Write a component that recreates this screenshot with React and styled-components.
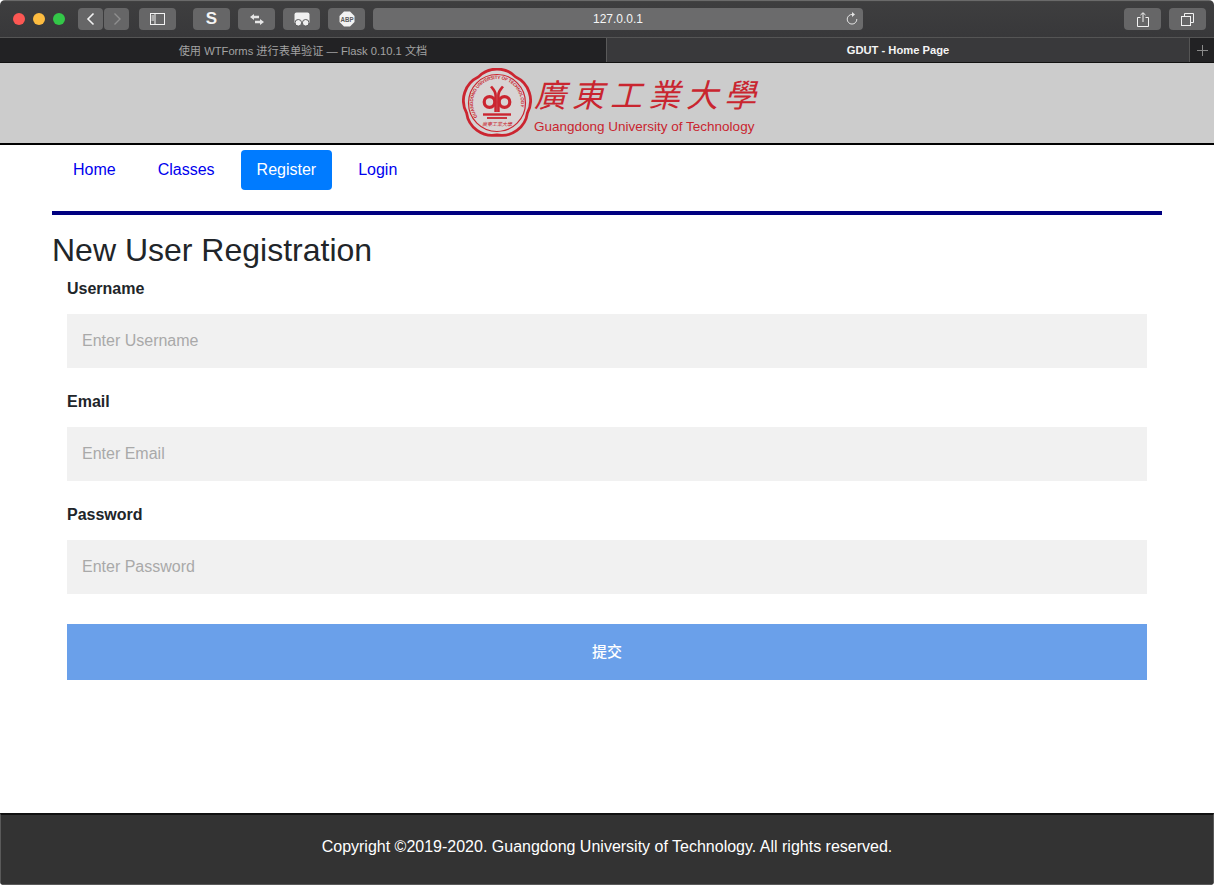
import React from 'react';
import styled, { createGlobalStyle } from 'styled-components';

const GlobalStyle = createGlobalStyle`
  html, body { margin: 0; padding: 0; background: #fff; }
  body { font-family: "Liberation Sans", Arial, sans-serif; color: #212529; }
  * { box-sizing: border-box; }
`;

const Page = styled.div`
  width: 1214px;
  height: 885px;
  display: flex;
  flex-direction: column;
  overflow: hidden;
  position: relative;
  border-radius: 5px 5px 4px 4px;
`;

const TitleBar = styled.div`
  height: 37px;
  flex: none;
  display: flex;
  align-items: center;
  padding: 0 8px 0 13px;
  background: linear-gradient(#444 0, #3e3e3f 4%, #38383a 100%);
  border-top: 1px solid #6a6a6a;
`;

const Lights = styled.div`
  display: flex;
  gap: 8px;
  margin-right: 13px;
`;

const Light = styled.span`
  width: 12px;
  height: 12px;
  border-radius: 50%;
  background: ${p => p.$color};
`;

const Tool = styled.div`
  width: ${p => p.$w || 37}px;
  height: 22px;
  margin-left: ${p => p.$ml || 0}px;
  flex: none;
  border-radius: 4px;
  background: #666667;
  display: flex;
  align-items: center;
  justify-content: center;
  color: #f2f2f2;
`;

const SLetter = styled.span`
  font-size: 17px;
  font-weight: 700;
  color: #f4f4f4;
`;

const AddressBar = styled.div`
  width: 490px;
  height: 22px;
  margin-left: 8px;
  flex: none;
  position: relative;
  border-radius: 4px;
  background: #6b6b6c;
  color: #f6f6f6;
  font-size: 12px;
  display: flex;
  align-items: center;
  justify-content: center;
`;

const Reload = styled.span`
  position: absolute;
  right: 4px;
  top: 4px;
  display: flex;
`;

const Spacer = styled.div`
  flex: 1;
`;

const TabBar = styled.div`
  height: 26px;
  flex: none;
  display: flex;
  background: #222224;
  border-top: 1px solid #555;
  border-bottom: 1px solid #111;
`;

const Tab = styled.div`
  flex: none;
  width: ${p => p.$w}px;
  display: flex;
  align-items: center;
  justify-content: center;
  font-size: 11.2px;
  font-weight: ${p => (p.$active ? 700 : 400)};
  font-family: "Liberation Sans", "Noto Sans CJK SC", sans-serif;
  color: ${p => (p.$active ? '#f4f4f4' : '#a3a3a3')};
  background: ${p => (p.$active ? '#39393b' : '#222224')};
  border-left: ${p => (p.$active ? '1px solid #5a5a5a' : 'none')};
`;

const NewTab = styled.div`
  flex: 1;
  display: flex;
  align-items: center;
  justify-content: center;
  border-left: 1px solid #555;
  color: #8a8a8a;
`;

const Banner = styled.header`
  height: 82px;
  flex: none;
  padding-left: 6px;
  background: #cccccc;
  border-bottom: 2px solid #000;
  display: flex;
  justify-content: center;
  align-items: center;
`;

const Logo = styled.div`
  display: flex;
  align-items: center;
  gap: 2px;
  color: #c9252f;
`;

const LogoText = styled.div`
  display: flex;
  flex-direction: column;
  width: 224px;
  padding-top: 2px;
`;

const LogoCn = styled.div`
  font-family: "Noto Sans CJK TC", sans-serif;
  font-size: 32px;
  font-weight: 400;
  font-style: italic;
  line-height: 40px;
  letter-spacing: 6px;
  white-space: nowrap;
`;

const LogoEn = styled.div`
  font-size: 13.5px;
  line-height: 16px;
  margin-top: 6px;
  white-space: nowrap;
`;

const Content = styled.main`
  flex: 1;
  padding: 5px 52px 0;
`;

const Nav = styled.nav`
  display: flex;
  height: 40px;
`;

const NavLink = styled.a`
  display: block;
  padding: 0 ${p => (p.$active ? 16 : 21)}px;
  margin: 0 ${p => (p.$active ? 5 : 0)}px;
  line-height: 40px;
  font-size: 16px;
  border-radius: 4px;
  color: ${p => (p.$active ? '#fff' : '#0000ee')};
  background: ${p => (p.$active ? '#007bff' : 'transparent')};
`;

const Rule = styled.hr`
  margin: 21px 0 0;
  border: 0;
  height: 4px;
  background: #000080;
`;

const Heading = styled.h2`
  margin: 16px 0 0;
  font-size: 32px;
  font-weight: 400;
  line-height: 38px;
  color: #212529;
`;

const Form = styled.form`
  padding: 8px 15px 0;
`;

const Field = styled.div`
  margin-bottom: 22px;
`;

const Label = styled.label`
  display: block;
  font-size: 16px;
  font-weight: 700;
  line-height: 24px;
  height: 24px;
  margin-bottom: 13px;
  color: #212529;
`;

const Input = styled.input`
  display: block;
  width: 100%;
  height: 54px;
  border: 0;
  outline: 0;
  padding: 0 15px;
  background: #f1f1f1;
  font: 16px "Liberation Sans", Arial, sans-serif;
  color: #212529;
  &::placeholder { color: #a9a9a9; opacity: 1; }
`;

const Submit = styled.button`
  display: block;
  width: 100%;
  height: 56px;
  margin-top: 30px;
  padding: 0 0 4px;
  border: 0;
  background: #6aa0ea;
  color: #fff;
  font: 500 15px "Liberation Sans", "Noto Sans CJK SC", sans-serif;
`;

const Footer = styled.footer`
  height: 72px;
  flex: none;
  padding-bottom: 6px;
  background: #333333;
  border-top: 2px solid #111;
  border-left: 1px solid #5a5a5a;
  border-right: 1px solid #5a5a5a;
  border-bottom: 1px solid #5a5a5a;
  color: #fff;
  font-size: 16px;
  display: flex;
  align-items: center;
  justify-content: center;
`;

// five lobes around the seal, notches on a 32px radius
const lobes = () => {
  const pts = [-54, 18, 90, 162, 234].map(a => {
    const r = (a * Math.PI) / 180;
    return [(35 + 32 * Math.cos(r)).toFixed(2), (35 + 32 * Math.sin(r)).toFixed(2)];
  });
  const arcs = pts.map(([x, y]) => `A26 26 0 0 1 ${x} ${y}`).join(' ');
  return `M${pts[4][0]} ${pts[4][1]} ${arcs} Z`;
};

function Emblem() {
  return (
    <svg width="70" height="70" viewBox="0 0 70 70">
      <defs>
        <path id="ring" d="M15.500 49 A24 24 0 1 1 54.500 49" />
      </defs>
      <path d={lobes()} fill="#d4d4d4" stroke="#cb2530" strokeWidth="2.800" />
      <circle cx="35" cy="35" r="28.500" fill="#d8d4d4" stroke="#cb2530" strokeWidth="1.200" />
      <text fill="#c9252f" fontSize="4.600" fontFamily="Liberation Sans" fontWeight="700">
        <textPath href="#ring" textLength="94" lengthAdjust="spacing">GUANGDONG UNIVERSITY OF TECHNOLOGY</textPath>
      </text>
      <g fill="none" stroke="#cb2530">
        <circle cx="27.500" cy="34" r="5.300" strokeWidth="3.200" />
        <circle cx="42.500" cy="34" r="5.300" strokeWidth="3.200" />
        <path d="M33.600 44 V27 C33.600 23 31 21 29 18.500 M36.400 44 V27 C36.400 23 39 21 41 18.500" strokeWidth="2.600" />
        <path d="M21 46.500 H49" strokeWidth="2.400" />
        <path d="M25 50 H45" strokeWidth="1.800" />
      </g>
      <text x="35" y="57.500" textAnchor="middle" fill="#c9252f" fontSize="5" fontStyle="italic" fontFamily="Noto Sans CJK TC">廣東工業大學</text>
    </svg>
  );
}

const ToolIcon = ({ w = 16, h = 16, children }) => (
  <svg width={w} height={h} viewBox={`0 0 ${w} ${h}`} fill="none" stroke="currentColor" strokeWidth="1">
    {children}
  </svg>
);

export default function App() {
  return (
    <Page>
      <GlobalStyle />
      <TitleBar>
        <Lights>
          <Light $color="#fc5753" />
          <Light $color="#fdbc40" />
          <Light $color="#33c748" />
        </Lights>
        <Tool $w={25}>
          <ToolIcon w={10} h={14}>
            <path d="M7.500 1.500 L2 7 L7.500 12.500" strokeWidth="1.600" />
          </ToolIcon>
        </Tool>
        <Tool $w={25} $ml={1}>
          <ToolIcon w={10} h={14}>
            <path d="M2.500 1.500 L8 7 L2.500 12.500" stroke="#8f8f8f" strokeWidth="1.400" />
          </ToolIcon>
        </Tool>
        <Tool $ml={10}>
          <ToolIcon w={15} h={12}>
            <rect x="0.500" y="0.500" width="14" height="11" />
            <path d="M5 0.500 V11.500 M1.500 3 H4 M1.500 5 H4 M1.500 7 H4" />
          </ToolIcon>
        </Tool>
        <Tool $ml={17}><SLetter>S</SLetter></Tool>
        <Tool $ml={8}>
          <ToolIcon w={14} h={11}>
            <path d="M0 3 L4 0 V1.800 H9 V4.300 H4 V6 Z M14 8 L10 5 V6.700 H5 V9.200 H10 V11 Z" fill="#e6e6e6" stroke="none" />
          </ToolIcon>
        </Tool>
        <Tool $ml={8}>
          <ToolIcon w={16} h={15}>
            <path d="M0.500 11 V2.500 Q0.500 0.500 2.500 0.500 H13.500 Q15.500 0.500 15.500 2.500 V11 Z" fill="#f0f0f0" stroke="none" />
            <circle cx="4.300" cy="10.800" r="3.300" fill="#f0f0f0" stroke="#5a5a5b" strokeWidth="1" />
            <circle cx="11.700" cy="10.800" r="3.300" fill="#f0f0f0" stroke="#5a5a5b" strokeWidth="1" />
          </ToolIcon>
        </Tool>
        <Tool $ml={8}>
          <svg width="16" height="16" viewBox="0 0 16 16">
            <path d="M5 0.500 H11 L15.500 5 V11 L11 15.500 H5 L0.500 11 V5 Z" fill="#f2f2f2" />
            <text x="8" y="10.500" textAnchor="middle" fontSize="6.800" textLength="13" lengthAdjust="spacingAndGlyphs" fontFamily="Liberation Sans" fontWeight="700" fill="#5a5a5a">ABP</text>
          </svg>
        </Tool>
        <AddressBar>
          127.0.0.1
          <Reload>
            <svg width="14" height="14" viewBox="0 0 14 14" fill="none" stroke="#e4e4e4" strokeWidth="1">
              <path d="M7.500 2.500 A4.800 4.800 0 1 0 11.800 7" />
              <path d="M7 0 L10 2.500 L7 5 Z" fill="#e4e4e4" stroke="none" />
            </svg>
          </Reload>
        </AddressBar>
        <Spacer />
        <Tool>
          <ToolIcon w={12} h={15}>
            <path d="M3.500 5.500 H0.500 V14.500 H11.500 V5.500 H8.500 M6 10 V1 M3.500 3 L6 0.700 L8.500 3" />
          </ToolIcon>
        </Tool>
        <Tool $ml={8}>
          <ToolIcon w={13} h={13}>
            <rect x="0.500" y="3.500" width="9" height="9" />
            <path d="M3.500 3.500 V0.500 H12.500 V9.500 H9.500" />
          </ToolIcon>
        </Tool>
      </TitleBar>

      <TabBar>
        <Tab $w={606}>使用 WTForms 进行表单验证 — Flask 0.10.1 文档</Tab>
        <Tab $w={583} $active>GDUT - Home Page</Tab>
        <NewTab>
          <svg width="11" height="11" viewBox="0 0 11 11" stroke="currentColor" strokeWidth="1">
            <path d="M5.500 0 V11 M0 5.500 H11" />
          </svg>
        </NewTab>
      </TabBar>

      <Banner>
        <Logo>
          <Emblem />
          <LogoText>
            <LogoCn>廣東工業大學</LogoCn>
            <LogoEn>Guangdong University of Technology</LogoEn>
          </LogoText>
        </Logo>
      </Banner>

      <Content>
        <Nav>
          <NavLink>Home</NavLink>
          <NavLink>Classes</NavLink>
          <NavLink $active>Register</NavLink>
          <NavLink>Login</NavLink>
        </Nav>
        <Rule />
        <Heading>New User Registration</Heading>
        <Form>
          <Field>
            <Label>Username</Label>
            <Input placeholder="Enter Username" />
          </Field>
          <Field>
            <Label>Email</Label>
            <Input placeholder="Enter Email" />
          </Field>
          <Field>
            <Label>Password</Label>
            <Input placeholder="Enter Password" />
          </Field>
          <Submit type="button">提交</Submit>
        </Form>
      </Content>

      <Footer>Copyright ©2019-2020. Guangdong University of Technology. All rights reserved.</Footer>
    </Page>
  );
}
